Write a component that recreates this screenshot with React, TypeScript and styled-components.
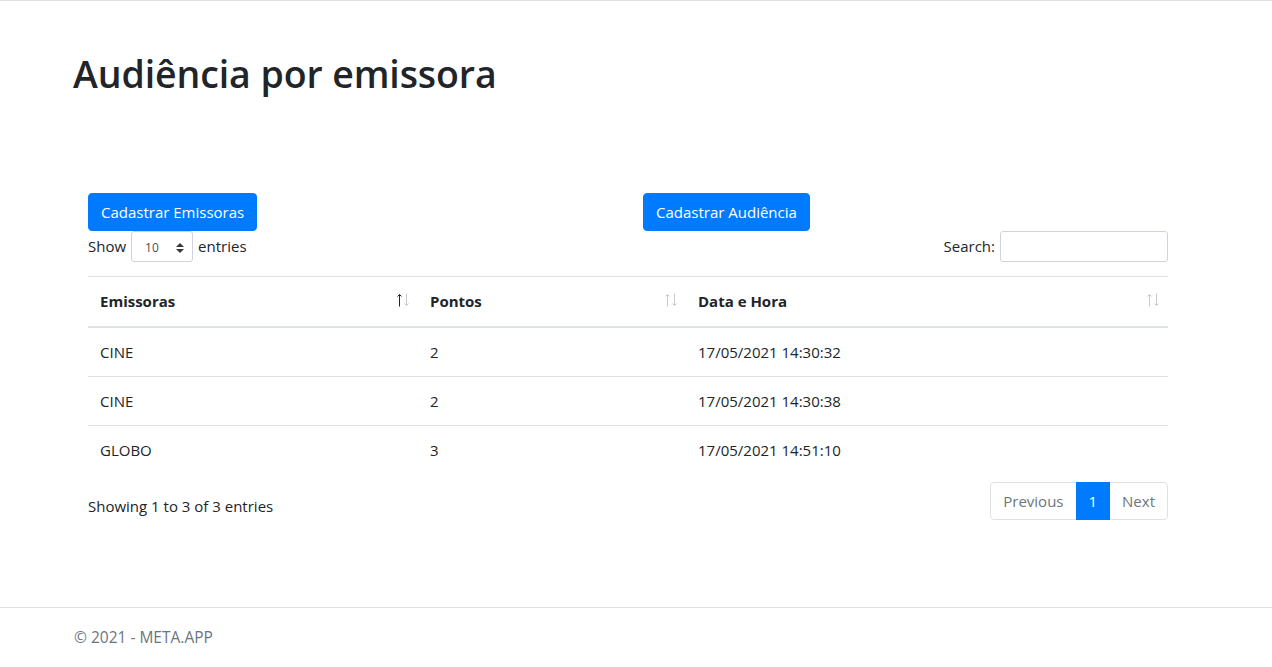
import styled, { createGlobalStyle } from 'styled-components';

type Row = {
  id: number;
  emissora: string;
  pontos: number;
  data: string;
};

const rows: Row[] = [
  { id: 1, emissora: 'CINE', pontos: 2, data: '17/05/2021 14:30:32' },
  { id: 2, emissora: 'CINE', pontos: 2, data: '17/05/2021 14:30:38' },
  { id: 3, emissora: 'GLOBO', pontos: 3, data: '17/05/2021 14:51:10' },
];

const columns = [
  { label: 'Emissoras', width: 330, active: true },
  { label: 'Pontos', width: 268, active: false },
  { label: 'Data e Hora', width: 482, active: false },
];

const SortIcon = ({ active }: { active: boolean }) => (
  <svg width="16" height="14" viewBox="0 0 16 14">
    <g stroke={active ? '#212529' : '#c8cacd'} strokeWidth="1" fill="none">
      <path d="M3.5 1.5 V13.5 M1.5 3.5 L3.5 1.5 L5.5 3.5" />
    </g>
    <g stroke="#c8cacd" strokeWidth="1" fill="none">
      <path d="M10.5 0.5 V12.5 M8.5 10.5 L10.5 12.5 L12.5 10.5" />
    </g>
  </svg>
);

const App = () => {
  return (
    <Wrapper>
      <GlobalStyle />
      <Header />
      <Main>
        <Title>Audiência por emissora</Title>
        <Section>
          <ButtonRow>
            <div>
              <PrimaryButton>Cadastrar Emissoras</PrimaryButton>
            </div>
            <div>
              <PrimaryButton>Cadastrar Audiência</PrimaryButton>
            </div>
          </ButtonRow>
          <Controls>
            <Label>
              Show
              <SelectBox>
                <span>10</span>
                <svg width="8" height="10" viewBox="0 0 8 10">
                  <path d="M4 0 L8 4 H0 Z M0 6 H8 L4 10 Z" fill="#343a40" />
                </svg>
              </SelectBox>
              entries
            </Label>
            <Label>
              Search:
              <SearchInput />
            </Label>
          </Controls>
          <Table>
            <colgroup>
              {columns.map((c) => (
                <col key={c.label} style={{ width: c.width }} />
              ))}
            </colgroup>
            <thead>
              <tr>
                {columns.map((c) => (
                  <Th key={c.label}>
                    {c.label}
                    <SortIcons>
                      <SortIcon active={c.active} />
                    </SortIcons>
                  </Th>
                ))}
              </tr>
            </thead>
            <tbody>
              {rows.map((r) => (
                <tr key={r.id}>
                  <Td>{r.emissora}</Td>
                  <Td>{r.pontos}</Td>
                  <Td>{r.data}</Td>
                </tr>
              ))}
            </tbody>
          </Table>
          <Bottom>
            <Info>Showing 1 to 3 of 3 entries</Info>
            <Pagination>
              <PageItem $disabled>Previous</PageItem>
              <PageItem $active>1</PageItem>
              <PageItem $disabled>Next</PageItem>
            </Pagination>
          </Bottom>
        </Section>
      </Main>
      <Footer>© 2021 - META.APP</Footer>
    </Wrapper>
  );
};

const GlobalStyle = createGlobalStyle`
  * {
    box-sizing: border-box;
  }

  body {
    margin: 0;
    font-family: 'Open Sans', 'Noto Sans', sans-serif;
    font-size: 16px;
    line-height: 1.5;
    color: #212529;
    background: #fff;
  }
`;

const Wrapper = styled.div`
  min-height: 100vh;
  display: flex;
  flex-direction: column;
`;

const Header = styled.header`
  border-bottom: 1px solid #dee2e6;
`;

const Main = styled.main`
  padding: 49px 73px 0;
`;

const Title = styled.h1`
  margin: 0 0 95px;
  font-size: 37.5px;
  font-weight: 600;
  letter-spacing: -0.1px;
  line-height: 48px;
`;

const Section = styled.div`
  width: 1080px;
  margin-left: 15px;
`;

const ButtonRow = styled.div`
  display: grid;
  grid-template-columns: 1fr 1fr;
  column-gap: 30px;
`;

const PrimaryButton = styled.button`
  font-family: inherit;
  font-size: 15px;
  line-height: 24px;
  padding: 6px 12px;
  color: #fff;
  background: #007bff;
  border: 1px solid #007bff;
  border-radius: 4px;
`;

const Controls = styled.div`
  display: flex;
  justify-content: space-between;
  align-items: flex-start;
  height: 45px;
`;

const Label = styled.label`
  display: flex;
  align-items: center;
  gap: 5px;
  font-size: 15px;
  height: 31px;
`;

const SelectBox = styled.div`
  width: 62px;
  height: 31px;
  border: 1px solid #ced4da;
  border-radius: 3px;
  display: flex;
  align-items: center;
  justify-content: space-between;
  padding: 2px 8px 0 13px;
  font-size: 12px;
  color: #495057;
`;

const SearchInput = styled.div`
  width: 168px;
  height: 31px;
  border: 1px solid #ced4da;
  border-radius: 3px;
`;

const Table = styled.table`
  width: 100%;
  border-collapse: collapse;
  table-layout: fixed;
`;

const Th = styled.th`
  position: relative;
  text-align: left;
  font-size: 15px;
  font-weight: 700;
  padding: 12px 12px 13px;
  line-height: 24px;
  border-top: 1px solid #dee2e6;
  border-bottom: 2px solid #dee2e6;
`;

const SortIcons = styled.span`
  position: absolute;
  right: 6px;
  top: 16px;
  display: flex;
`;

const Td = styled.td`
  font-size: 15px;
  padding: 12px;
  line-height: 24px;
  border-top: 1px solid #dee2e6;

  tr:first-child > & {
    border-top: none;
  }
`;

const Bottom = styled.div`
  display: flex;
  justify-content: space-between;
  align-items: flex-start;
  padding-top: 8px;
`;

const Info = styled.div`
  font-size: 15px;
  padding-top: 13px;
`;

const Pagination = styled.div`
  display: flex;
`;

const PageItem = styled.div<{ $active?: boolean; $disabled?: boolean }>`
  font-size: 15px;
  line-height: 24px;
  padding: 6px 12px;
  margin-left: -1px;
  border: 1px solid ${({ $active }) => ($active ? '#007bff' : '#dee2e6')};
  background: ${({ $active }) => ($active ? '#007bff' : '#fff')};
  color: ${({ $active }) => ($active ? '#fff' : '#6c757d')};
  position: relative;
  z-index: ${({ $active }) => ($active ? 1 : 0)};

  &:first-child {
    border-radius: 4px 0 0 4px;
  }

  &:last-child {
    border-radius: 0 4px 4px 0;
  }
`;

const Footer = styled.footer`
  margin-top: auto;
  border-top: 1px solid #dee2e6;
  line-height: 59px;
  padding-left: 74px;
  font-size: 15.5px;
  color: #6c757d;
`;

export default App;
